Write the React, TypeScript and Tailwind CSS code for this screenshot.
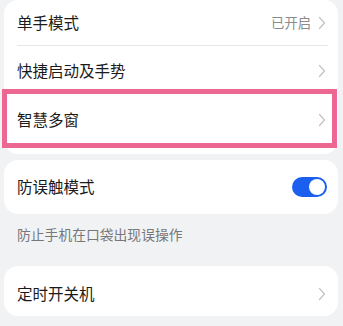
import React from "react";

function Chevron() {
  return (
    <svg width="8" height="14" viewBox="0 0 8 14" fill="none">
      <path d="M1.5 1.5 L6.5 7 L1.5 12.5" stroke="#c4c4c6" strokeWidth="1.3" strokeLinecap="round" strokeLinejoin="round" />
    </svg>
  );
}

export default function App() {
  return (
    <div className="w-[343px] h-[326px] bg-[#f1f2f4] overflow-hidden font-['Noto_Sans_CJK_SC',sans-serif] text-[#1b1b1b]">
      <div className="relative ml-[4px] mr-[5px] bg-white rounded-[14px] pb-[10px]">
        <div className="h-[45px] flex items-center justify-between pl-[13px] pr-[12px]">
          <span className="text-[15.5px]">单手模式</span>
          <div className="flex items-center gap-[7px]">
            <span className="text-[13.3px] text-[#8a8a8a]">已开启</span>
            <Chevron />
          </div>
        </div>
        <div className="ml-[13px] mr-[10px] h-px bg-[#e7e7e9]" />
        <div className="h-[50px] flex items-center justify-between pl-[13px] pr-[12px]">
          <span className="text-[15.5px]">快捷启动及手势</span>
          <Chevron />
        </div>
        <div className="h-[48px] flex items-center justify-between pl-[13px] pr-[12px]">
          <span className="text-[15.5px]">智慧多窗</span>
          <Chevron />
        </div>
        <div className="absolute left-[-2px] right-[1px] top-[89px] h-[59px] border-[5px] border-[#ec6892]" />
      </div>

      <div className="mt-[6px] ml-[4px] mr-[5px] bg-white rounded-[14px] h-[54px] flex items-center justify-between pl-[13px] pr-[11px]">
        <span className="text-[15.5px]">防误触模式</span>
        <div className="w-[35px] h-[20px] rounded-full bg-[#1a5ff0] flex items-center justify-end pr-[2px]">
          <div className="w-[16px] h-[16px] rounded-full bg-white" />
        </div>
      </div>

      <div className="pt-[10px] pl-[17px] text-[13.8px] leading-[20px] text-[#777779]">防止手机在口袋出现误操作</div>

      <div className="mt-[22px] ml-[4px] mr-[5px] bg-white rounded-[14px] h-[50px] pt-[6px] flex items-center justify-between pl-[13px] pr-[12px]">
        <span className="text-[15.5px]">定时开关机</span>
        <Chevron />
      </div>
    </div>
  );
}
